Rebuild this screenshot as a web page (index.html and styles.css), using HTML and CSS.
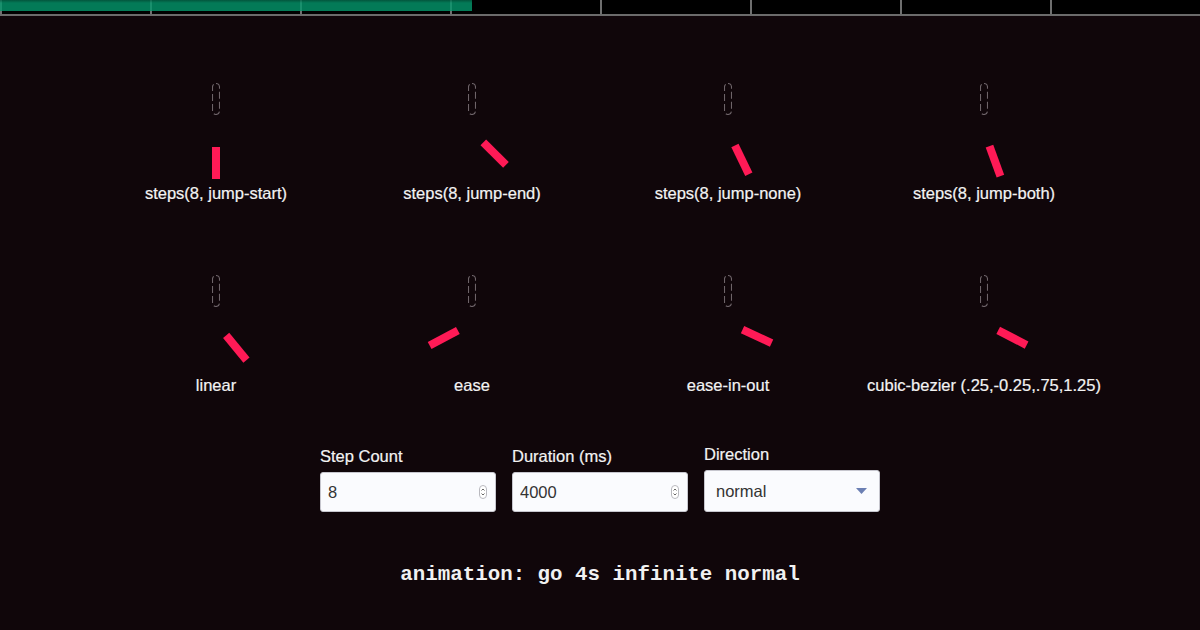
FILE: index.html
```html
<!DOCTYPE html>
<html lang="en">
<head>
    <meta charset="UTF-8">
    <meta name="viewport" content="width=device-width, initial-scale=1.0">
    <title>Steps Clock</title>
    <link rel="stylesheet" href="styles.css">
</head>
<body>
    <header class="timeline">
        <div class="timeline-fill"></div>
    </header>

    <main class="clocks">
        <div class="clock">
            <div class="dial">
                <svg class="ghost" width="8" height="32" viewBox="0 0 8 32"><rect x="0.5" y="0.5" width="7" height="31" rx="3.5"/></svg>
                <span class="hand" style="transform: rotate(180deg)"></span>
            </div>
            <div class="clock-label">steps(8, jump-start)</div>
        </div>
        <div class="clock">
            <div class="dial">
                <svg class="ghost" width="8" height="32" viewBox="0 0 8 32"><rect x="0.5" y="0.5" width="7" height="31" rx="3.5"/></svg>
                <span class="hand" style="transform: rotate(135deg)"></span>
            </div>
            <div class="clock-label">steps(8, jump-end)</div>
        </div>
        <div class="clock">
            <div class="dial">
                <svg class="ghost" width="8" height="32" viewBox="0 0 8 32"><rect x="0.5" y="0.5" width="7" height="31" rx="3.5"/></svg>
                <span class="hand" style="transform: rotate(154.3deg)"></span>
            </div>
            <div class="clock-label">steps(8, jump-none)</div>
        </div>
        <div class="clock">
            <div class="dial">
                <svg class="ghost" width="8" height="32" viewBox="0 0 8 32"><rect x="0.5" y="0.5" width="7" height="31" rx="3.5"/></svg>
                <span class="hand" style="transform: rotate(160deg)"></span>
            </div>
            <div class="clock-label">steps(8, jump-both)</div>
        </div>
        <div class="clock">
            <div class="dial">
                <svg class="ghost" width="8" height="32" viewBox="0 0 8 32"><rect x="0.5" y="0.5" width="7" height="31" rx="3.5"/></svg>
                <span class="hand" style="transform: rotate(140.6deg)"></span>
            </div>
            <div class="clock-label">linear</div>
        </div>
        <div class="clock">
            <div class="dial">
                <svg class="ghost" width="8" height="32" viewBox="0 0 8 32"><rect x="0.5" y="0.5" width="7" height="31" rx="3.5"/></svg>
                <span class="hand" style="transform: rotate(242deg)"></span>
            </div>
            <div class="clock-label">ease</div>
        </div>
        <div class="clock">
            <div class="dial">
                <svg class="ghost" width="8" height="32" viewBox="0 0 8 32"><rect x="0.5" y="0.5" width="7" height="31" rx="3.5"/></svg>
                <span class="hand" style="transform: rotate(114.8deg)"></span>
            </div>
            <div class="clock-label">ease-in-out</div>
        </div>
        <div class="clock">
            <div class="dial">
                <svg class="ghost" width="8" height="32" viewBox="0 0 8 32"><rect x="0.5" y="0.5" width="7" height="31" rx="3.5"/></svg>
                <span class="hand" style="transform: rotate(117.4deg)"></span>
            </div>
            <div class="clock-label">cubic-bezier (.25,-0.25,.75,1.25)</div>
        </div>
    </main>

    <form class="controls">
        <label class="control">
            <span class="control-label">Step Count</span>
            <span class="field">
                <input type="number" value="8">
                <svg class="spinner" width="8" height="14" viewBox="0 0 8 14">
                    <rect x="0.5" y="0.5" width="7" height="13" rx="3.5" fill="#fff" stroke="#b9b9bf"/>
                    <path d="M2.5 5.5 L4 4 L5.5 5.5 M2.5 8.5 L4 10 L5.5 8.5" fill="none" stroke="#555" stroke-width="0.9"/>
                </svg>
            </span>
        </label>
        <label class="control">
            <span class="control-label">Duration (ms)</span>
            <span class="field">
                <input type="number" value="4000">
                <svg class="spinner" width="8" height="14" viewBox="0 0 8 14">
                    <rect x="0.5" y="0.5" width="7" height="13" rx="3.5" fill="#fff" stroke="#b9b9bf"/>
                    <path d="M2.5 5.5 L4 4 L5.5 5.5 M2.5 8.5 L4 10 L5.5 8.5" fill="none" stroke="#555" stroke-width="0.9"/>
                </svg>
            </span>
        </label>
        <label class="control">
            <span class="control-label">Direction</span>
            <span class="field field-select">
                <select>
                    <option>normal</option>
                    <option>reverse</option>
                    <option>alternate</option>
                    <option>alternate-reverse</option>
                </select>
                <svg class="caret" width="11" height="6" viewBox="0 0 11 6">
                    <path d="M0 0 H11 L5.5 6 Z" fill="#6b7fb3"/>
                </svg>
            </span>
        </label>
    </form>

    <pre class="code">animation: go 4s infinite normal</pre>
</body>
</html>
```

FILE: styles.css
```css
:root {
    --bg: #10060a;
    --hand: #ff1a56;
    --text: #f3f3f3;
}

* {
    margin: 0;
    padding: 0;
    box-sizing: border-box;
}

body {
    background-color: var(--bg);
    color: var(--text);
    font-family: "Liberation Sans", Arial, sans-serif;
    font-size: 16.5px;
    min-height: 100vh;
}

/* progress strip with a tick every eighth */
.timeline {
    height: 16px;
    border-bottom: 2px solid #6b6b6b;
    background: repeating-linear-gradient(to right, #6f6f6f 0 2px, #000 2px 150px);
}

.timeline-fill {
    width: 472px;
    height: 11px;
    background:
        linear-gradient(to bottom, rgba(0, 0, 0, 0.3), rgba(0, 0, 0, 0) 3px),
        rgba(4, 152, 109, 0.8);
}

.clocks {
    display: grid;
    grid-template-columns: repeat(4, 256px);
    justify-content: center;
    row-gap: 72px;
    margin-top: 67px;
}

.clock {
    display: flex;
    flex-direction: column;
    align-items: center;
}

.dial {
    position: relative;
    width: 96px;
    height: 96px;
}

/* resting position of the hand, drawn dashed */
.ghost,
.hand {
    position: absolute;
    left: 44px;
    top: 0;
    width: 8px;
    height: 32px;
}

.ghost rect {
    fill: none;
    stroke: #6e6469;
    stroke-width: 1.1;
    stroke-dasharray: 7 3;
}

.hand {
    background-color: var(--hand);
    transform-origin: 4px 48px;
}

.clock-label,
.control-label {
    -webkit-text-stroke: 0.2px var(--text);
}

.clock-label {
    margin-top: 4px;
    line-height: 20px;
    white-space: nowrap;
}

.controls {
    display: flex;
    justify-content: center;
    align-items: flex-end;
    gap: 16px;
    margin-top: 49px;
}

.control {
    display: flex;
    flex-direction: column;
    width: 176px;
}

.control-label {
    line-height: 20px;
    margin-bottom: 6px;
}

.field {
    display: flex;
    align-items: center;
    height: 40px;
    padding: 0 8px 0 7px;
    background-color: #fafbfe;
    border: 1px solid #c6c6ce;
    border-radius: 3px;
}

.field input,
.field select {
    flex: 1;
    min-width: 0;
    border: none;
    outline: none;
    background: transparent;
    color: #333;
    font: inherit;
    -moz-appearance: textfield;
    appearance: none;
}

.field input::-webkit-inner-spin-button,
.field input::-webkit-outer-spin-button {
    -webkit-appearance: none;
    margin: 0;
}

.field-select {
    height: 42px;
    padding: 0 12px 0 11px;
}

.spinner,
.caret {
    flex-shrink: 0;
}

.code {
    margin-top: 51px;
    text-align: center;
    font-family: "Liberation Mono", "Courier New", monospace;
    font-weight: bold;
    font-size: 20.8px;
    line-height: 24px;
    color: #f1f1f1;
}
```
